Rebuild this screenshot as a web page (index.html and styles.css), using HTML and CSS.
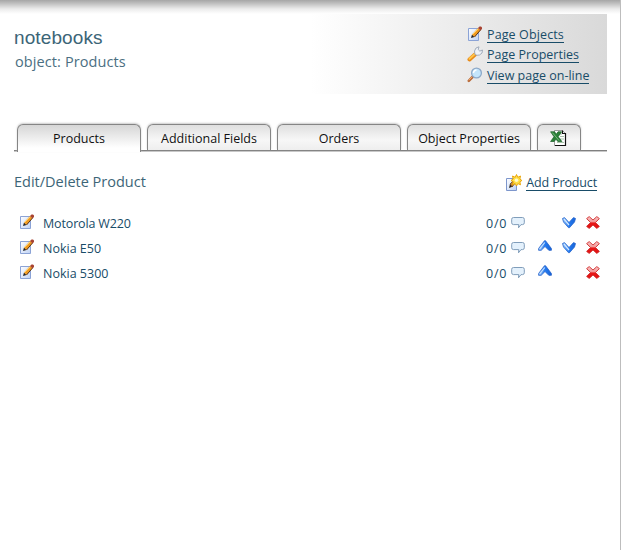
FILE: index.html
```html
<!DOCTYPE html>
<html lang="en">
<head>
<meta charset="utf-8">
<title>notebooks</title>
<link rel="stylesheet" href="styles.css">
</head>
<body>
<svg class="defs" width="0" height="0">
  <defs>
    <linearGradient id="paper" x1="0" y1="0" x2="1" y2="1"><stop offset="0" stop-color="#fff"/><stop offset="1" stop-color="#bfd2f4"/></linearGradient>
    <linearGradient id="blue" x1="0" y1="0" x2="1" y2="0"><stop offset="0" stop-color="#9cc9fb"/><stop offset=".5" stop-color="#247af0"/><stop offset="1" stop-color="#1764d8"/></linearGradient>
    <linearGradient id="red" x1="0" y1="0" x2="0" y2="1"><stop offset="0" stop-color="#f9c8c8"/><stop offset=".42" stop-color="#f29a9a"/><stop offset=".55" stop-color="#e81818"/><stop offset="1" stop-color="#e01010"/></linearGradient>
    <symbol id="edit" viewBox="0 0 16 16">
      <path d="M1.500 2.500h10v12h-10z" fill="url(#paper)" stroke="#8ba3d6"/>
      <path d="M4 12l1-3.500 2.500 2.500z" fill="#222"/>
      <path d="M5 8.500l6-6.500 2.500 2-6 7z" fill="#f09a20"/>
      <path d="M5.500 8.500l6-6" stroke="#ffd36a"/>
      <path d="M7.500 11l6-7" stroke="#5a3418"/>
      <path d="M11 2l1.500-1.500h1.500l1 1v1.500l-1.500 1.500z" fill="#a84332"/>
    </symbol>
    <symbol id="wrench" viewBox="0 0 16 16">
      <path d="M2.500 13.500L8 8.500" stroke="#e88a18" stroke-width="4" stroke-linecap="round"/>
      <path d="M2.500 12.800L7.500 8.300" stroke="#ffc448" stroke-width="2" stroke-linecap="round"/>
      <path d="M8 8.500L7.500 5 9 2l3-1.200-.8 2.700 1.600 1.600L15.500 4 15 7l-2.500 2-2.500.3z" fill="#eef2f7" stroke="#9aa5b5" stroke-width=".9"/>
    </symbol>
    <symbol id="lens" viewBox="0 0 16 16">
      <path d="M1.800 13.800L5.500 10" stroke="#b96a3a" stroke-width="2.600" stroke-linecap="round"/>
      <path d="M1.800 13.200L5 10" stroke="#f0a868" stroke-width="1"/>
      <circle cx="9.500" cy="6" r="4.900" fill="#c4e5fb" stroke="#8ea9c8" stroke-width="1.300"/>
      <path d="M6.500 6a3 3 0 0 1 3-3" fill="none" stroke="#fff" stroke-width="1.500"/>
    </symbol>
    <symbol id="add" viewBox="0 0 16 17">
      <path d="M.5 4.500h10v12H.5z" fill="url(#paper)" stroke="#7d96cc"/>
      <path d="M3 14l1-4 3 2.500z" fill="#222"/>
      <path d="M4 10l4-4 2 2-4 5z" fill="#c98a35" stroke="#593a22" stroke-width=".7"/>
      <path d="M10.500.5l1.300 2.800L14.500 2l-.6 3 2 1.500-2 1.300.6 3-2.700-1.200-1.300 2.400-1.300-2.400-2.700 1.200.8-3L5 6.500 7.200 5l-.7-3 2.700 1.300z" fill="#ffe04a" stroke="#e8a000" stroke-width=".9"/>
      <circle cx="10.500" cy="6.300" r="1.800" fill="#fffbd0"/>
    </symbol>
    <symbol id="excel" viewBox="0 0 17 16">
      <path d="M4.500.5h8l3 3v12h-11z" fill="#fff" stroke="#777" stroke-width=".7"/>
      <path d="M12.500.5v3h3M15.500 3v12.500H5" fill="none" stroke="#111" stroke-width="1.200"/>
      <path d="M7 4h5M10 6.500h4M10 9h4M7 12.500h7" stroke="#a8c4aa" stroke-width="1"/>
      <path d="M.6 1.800h4L6.300 4.200 8 1.800h3.600L8.200 6.700l3.700 4.800H7.800L6 9.200l-1.800 2.300H.6L4 6.700z" fill="#2b8138" stroke="#195d25" stroke-width=".7"/>
      <path d="M2.300 2.600l6.800 8" stroke="#8cc790" stroke-width=".8"/>
    </symbol>
    <symbol id="talk" viewBox="0 0 14 13">
      <path d="M2.500 1.500h9q1.800 0 1.800 1.800v3.500q0 1.800-1.800 1.800H10L7.500 11.800 7.800 8.600H2.500Q.7 8.600.7 6.800V3.300Q.7 1.500 2.500 1.500z" fill="#e4f1fc" stroke="#809dba" stroke-width="1"/>
    </symbol>
    <symbol id="down" viewBox="0 0 14 12">
      <path d="M.5 1.500L2.500.6 7 5.500 11.500.6 13.500 1.500 12.500 5 7.500 10.700h-1L1.500 5z" fill="url(#blue)" stroke="#2866cc" stroke-width=".8"/>
      <path d="M2 2L7 8" stroke="#d2e8ff" stroke-width="1.200"/>
    </symbol>
    <symbol id="up" viewBox="0 0 14 12">
      <path d="M.6 8.500L6.500 .7h1L13.400 8.500v1.800h-2.600L7 6.500 3.200 10.300H.6z" fill="url(#blue)" stroke="#2460c8" stroke-width=".8"/>
      <path d="M1.800 8.800L6.800 2.500" stroke="#c4e0ff" stroke-width="1.200"/>
    </symbol>
    <symbol id="del" viewBox="0 0 14 13">
      <path d="M3.200.6L7 4 10.800.6 13.400 2.600 9.500 6.500 13.400 10.400 10.800 12.400 7 9 3.200 12.400.6 10.400 4.500 6.500.6 2.600z" fill="url(#red)" stroke="#cf3030" stroke-width=".9"/>
    </symbol>
  </defs>
</svg>
<div class="page">
  <header class="head">
    <div class="titles">
      <h1>notebooks</h1>
      <p class="object">object: Products</p>
    </div>
    <nav class="links">
      <div class="link"><svg class="icon"><use href="#edit"/></svg><a class="wide">Page Objects</a></div>
      <div class="link"><svg class="icon"><use href="#wrench"/></svg><a>Page Properties</a></div>
      <div class="link"><svg class="icon"><use href="#lens"/></svg><a>View page on-line</a></div>
    </nav>
  </header>
  <div class="tabs">
    <div class="tab active">Products</div>
    <div class="tab">Additional Fields</div>
    <div class="tab">Orders</div>
    <div class="tab">Object Properties</div>
    <div class="tab small"><svg class="xls"><use href="#excel"/></svg></div>
  </div>
  <div class="bar">
    <h2>Edit/Delete Product</h2>
    <div class="addlink"><svg class="addicon"><use href="#add"/></svg><a class="tight">Add Product</a></div>
  </div>
  <div class="rows">
    <div class="row"><svg class="icon"><use href="#edit"/></svg><span class="name tight">Motorola W220</span><span class="count">0/0</span><svg class="talk"><use href="#talk"/></svg><span class="slot"></span><svg class="slot"><use href="#down"/></svg><svg class="del"><use href="#del"/></svg></div>
    <div class="row"><svg class="icon"><use href="#edit"/></svg><span class="name">Nokia E50</span><span class="count">0/0</span><svg class="talk"><use href="#talk"/></svg><svg class="slot upper"><use href="#up"/></svg><svg class="slot"><use href="#down"/></svg><svg class="del"><use href="#del"/></svg></div>
    <div class="row"><svg class="icon"><use href="#edit"/></svg><span class="name">Nokia 5300</span><span class="count">0/0</span><svg class="talk"><use href="#talk"/></svg><svg class="slot upper"><use href="#up"/></svg><span class="slot"></span><svg class="del"><use href="#del"/></svg></div>
  </div>
</div>
</body>
</html>
```
FILE: styles.css
```css
* { box-sizing: border-box; }
body { margin: 0; background: #fff; font: 12.5px/16px "Trebuchet MS", "Open Sans", sans-serif; color: #184c68; overflow: hidden; }
.defs { display: block; height: 0; }
.page { height: 550px; padding: 14px 13px 0 14px; border-right: 1px solid #bdbdbd; background: linear-gradient(#a6a6a6, #c4c4c4 4px, #ececec 9px, #fff 14px) no-repeat 0 0 / 100% 14px; }
.head { display: flex; justify-content: space-between; height: 80px; background: linear-gradient(90deg, #fff 50%, #d9d9d9); }
h1 { margin: 13px 0 0; font: 19px/22px "Liberation Sans", Arial, sans-serif; letter-spacing: .1px; color: #3c6577; }
.object { margin: 4px 0 0 1px; font-size: 14.5px; line-height: 18px; letter-spacing: .1px; color: #4b6f82; }
.links { width: 140px; padding-top: 10px; }
.link { display: flex; height: 20.5px; align-items: center; gap: 4px; }
.icon { width: 16px; height: 16px; flex: none; }
a { border-bottom: 1px solid #184c68; line-height: 14px; height: 15px; white-space: nowrap; }
.link a { margin-top: 2px; }
.wide { letter-spacing: .12px; }
.tight { letter-spacing: -.15px; }
.tabs { display: flex; gap: 6px; margin-top: 30px; height: 28px; padding-left: 3px; border-bottom: 1px solid #808080; box-shadow: 0 1px 0 #c8c8c8; }
.tabs { height: 27px; }
.tab { width: 124px; height: 26px; padding-top: 2px; border: 1px solid #858585; border-bottom: 0; border-radius: 6px 6px 0 0; background: linear-gradient(#dfdfdf, #f7f7f7 60%, #eee); display: flex; justify-content: center; align-items: center; color: #111; box-shadow: 0 -1px 2px #ccc; white-space: nowrap; }
.active { height: 28px; padding-bottom: 2px; background: linear-gradient(#d6d6d6, #fff 85%); }
.tab.small { width: 44px; padding-top: 0; }
.xls { width: 17px; height: 16px; margin-right: 2px; }
.bar { display: flex; justify-content: space-between; align-items: center; height: 22px; margin-top: 20px; padding-right: 10px; }
h2 { margin: 0; font-size: 14.5px; line-height: 18px; font-weight: normal; color: #3c6577; }
.addlink { display: flex; align-items: center; gap: 4px; }
.addlink a { margin-top: 2px; }
.addicon { width: 16px; height: 17px; }
.rows { margin-top: 17px; padding-left: 5px; }
.row { display: flex; align-items: center; height: 25px; }
.icon { margin-top: -1px; }
.name { width: 443px; margin: 3px 0 0 8px; }
.count { width: 25px; margin-top: 3px; letter-spacing: .8px; }
.talk { width: 14px; height: 13px; margin-right: 13px; }
.slot { width: 14px; height: 12px; margin-right: 10px; }
.upper { margin-top: -3px; }
.del { width: 14px; height: 13px; margin-top: -1px; }
```
